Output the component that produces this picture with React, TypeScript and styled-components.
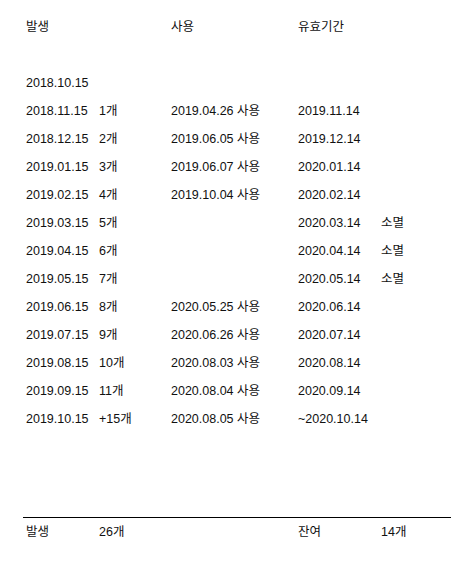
import { Fragment } from "react";
import styled, { createGlobalStyle } from "styled-components";

const GlobalStyle = createGlobalStyle`
  html, body {
    margin: 0;
    padding: 0;
    background: #ffffff;
  }
  body {
    font-family: "Liberation Sans", "Noto Sans CJK KR", sans-serif;
    color: #111;
  }
`;

interface Row {
  issued: string;
  count?: string;
  used?: string;
  expires?: string;
  note?: string;
}

const rows: Row[] = [
  { issued: "2018.10.15" },
  { issued: "2018.11.15", count: "1개", used: "2019.04.26 사용", expires: "2019.11.14" },
  { issued: "2018.12.15", count: "2개", used: "2019.06.05 사용", expires: "2019.12.14" },
  { issued: "2019.01.15", count: "3개", used: "2019.06.07 사용", expires: "2020.01.14" },
  { issued: "2019.02.15", count: "4개", used: "2019.10.04 사용", expires: "2020.02.14" },
  { issued: "2019.03.15", count: "5개", expires: "2020.03.14", note: "소멸" },
  { issued: "2019.04.15", count: "6개", expires: "2020.04.14", note: "소멸" },
  { issued: "2019.05.15", count: "7개", expires: "2020.05.14", note: "소멸" },
  { issued: "2019.06.15", count: "8개", used: "2020.05.25 사용", expires: "2020.06.14" },
  { issued: "2019.07.15", count: "9개", used: "2020.06.26 사용", expires: "2020.07.14" },
  { issued: "2019.08.15", count: "10개", used: "2020.08.03 사용", expires: "2020.08.14" },
  { issued: "2019.09.15", count: "11개", used: "2020.08.04 사용", expires: "2020.09.14" },
  { issued: "2019.10.15", count: "+15개", used: "2020.08.05 사용", expires: "~2020.10.14" },
];

const Page = styled.div`
  width: 428px;
  padding: 13px 0 0 23px;
`;

const Grid = styled.div`
  display: grid;
  grid-template-columns: 73px 72px 127px 83px 1fr;
  padding-left: 3px;
`;

const Cell = styled.div`
  height: 28px;
  line-height: 28px;
  font-size: 12.5px;
  white-space: nowrap;
`;

const Spacer = styled.div<{ $h: number }>`
  grid-column: 1 / -1;
  height: ${(p) => p.$h}px;
`;

const Divider = styled.hr`
  margin: 0;
  border: none;
  border-top: 1px solid #000;
  width: 428px;
`;

export default function App() {
  return (
    <>
      <GlobalStyle />
      <Page>
        <Grid>
          <Cell>발생</Cell>
          <Cell />
          <Cell>사용</Cell>
          <Cell>유효기간</Cell>
          <Cell />
          <Spacer $h={28} />
          {rows.map((r) => (
            <Fragment key={r.issued}>
              <Cell>{r.issued}</Cell>
              <Cell>{r.count}</Cell>
              <Cell>{r.used}</Cell>
              <Cell>{r.expires}</Cell>
              <Cell>{r.note}</Cell>
            </Fragment>
          ))}
          <Spacer $h={84} />
        </Grid>
        <Divider />
        <Grid>
          <Cell>발생</Cell>
          <Cell>26개</Cell>
          <Cell />
          <Cell>잔여</Cell>
          <Cell>14개</Cell>
        </Grid>
      </Page>
    </>
  );
}
